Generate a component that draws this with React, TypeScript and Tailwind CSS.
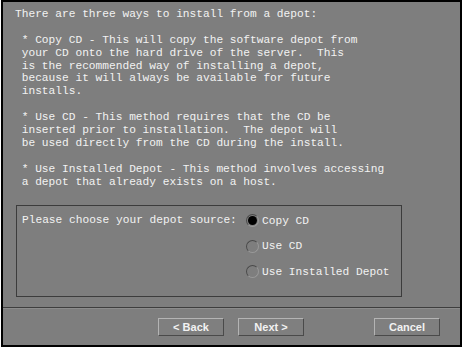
import React from "react";

const mono = { fontFamily: '"Liberation Mono", "DejaVu Sans Mono", monospace' };

const intro = [
  "There are three ways to install from a depot:",
  "",
  " * Copy CD - This will copy the software depot from",
  " your CD onto the hard drive of the server.  This",
  " is the recommended way of installing a depot,",
  " because it will always be available for future",
  " installs.",
  "",
  " * Use CD - This method requires that the CD be",
  " inserted prior to installation.  The depot will",
  " be used directly from the CD during the install.",
  "",
  " * Use Installed Depot - This method involves accessing",
  " a depot that already exists on a host.",
];

function Radio({ checked, label }: { checked?: boolean; label: string }) {
  return (
    <div className="flex items-center h-[13px]">
      <span className="w-[13px] h-[13px] rounded-full border border-t-[#4a4a4a] border-l-[#4a4a4a] border-b-[#9a9a9a] border-r-[#9a9a9a] flex items-center justify-center">
        {checked && <span className="w-[9px] h-[9px] rounded-full bg-black" />}
      </span>
      <span className="ml-[3px] whitespace-pre">{label}</span>
    </div>
  );
}

function Button({ label, className }: { label: string; className?: string }) {
  return (
    <div
      className={`w-[66px] h-[18px] border border-t-[#b4b4b4] border-l-[#b4b4b4] border-b-[#4a4a4a] border-r-[#4a4a4a] bg-[#7f7f7f] flex items-center justify-center text-[11px] font-bold text-[#f2f2f2] ${className ?? ""}`}
      style={{ fontFamily: '"Liberation Sans", Arial, sans-serif' }}
    >
      {label}
    </div>
  );
}

export default function App() {
  return (
    <div className="w-[465px] h-[350px] bg-white">
      <div className="ml-[1px] w-[461px] h-[347px] border-2 border-black bg-[#7e7e7e] flex flex-col text-[#f2f2f2]">
        <div className="pt-[6px] pl-[12px] text-[11.2px] leading-[12.9px]" style={mono}>
          {intro.map((line, i) => (
            <div key={i} className="whitespace-pre h-[12.9px]">
              {line}
            </div>
          ))}
        </div>

        <div
          className="mt-[17px] ml-[13px] w-[386px] h-[92px] border border-t-[#3c3c3c] border-l-[#3c3c3c] border-b-[#3c3c3c] border-r-[#3c3c3c] flex pt-[8px] pl-[5px] text-[11.2px]"
          style={mono}
        >
          <div className="whitespace-pre w-[224px] h-[13px] leading-[13px]">Please choose your depot source:</div>
          <div className="flex flex-col gap-[12.5px]">
            <Radio checked label="Copy CD" />
            <Radio label="Use CD" />
            <Radio label="Use Installed Depot" />
          </div>
        </div>

        <div className="mt-[10px] h-[2px] border-t border-t-[#3e3e3e] border-b border-b-[#8c8c8c]" />

        <div className="mt-[9px] flex">
          <Button label="< Back" className="ml-[155px]" />
          <Button label="Next >" className="ml-[14px]" />
          <Button label="Cancel" className="ml-[70px]" />
        </div>
      </div>
    </div>
  );
}
